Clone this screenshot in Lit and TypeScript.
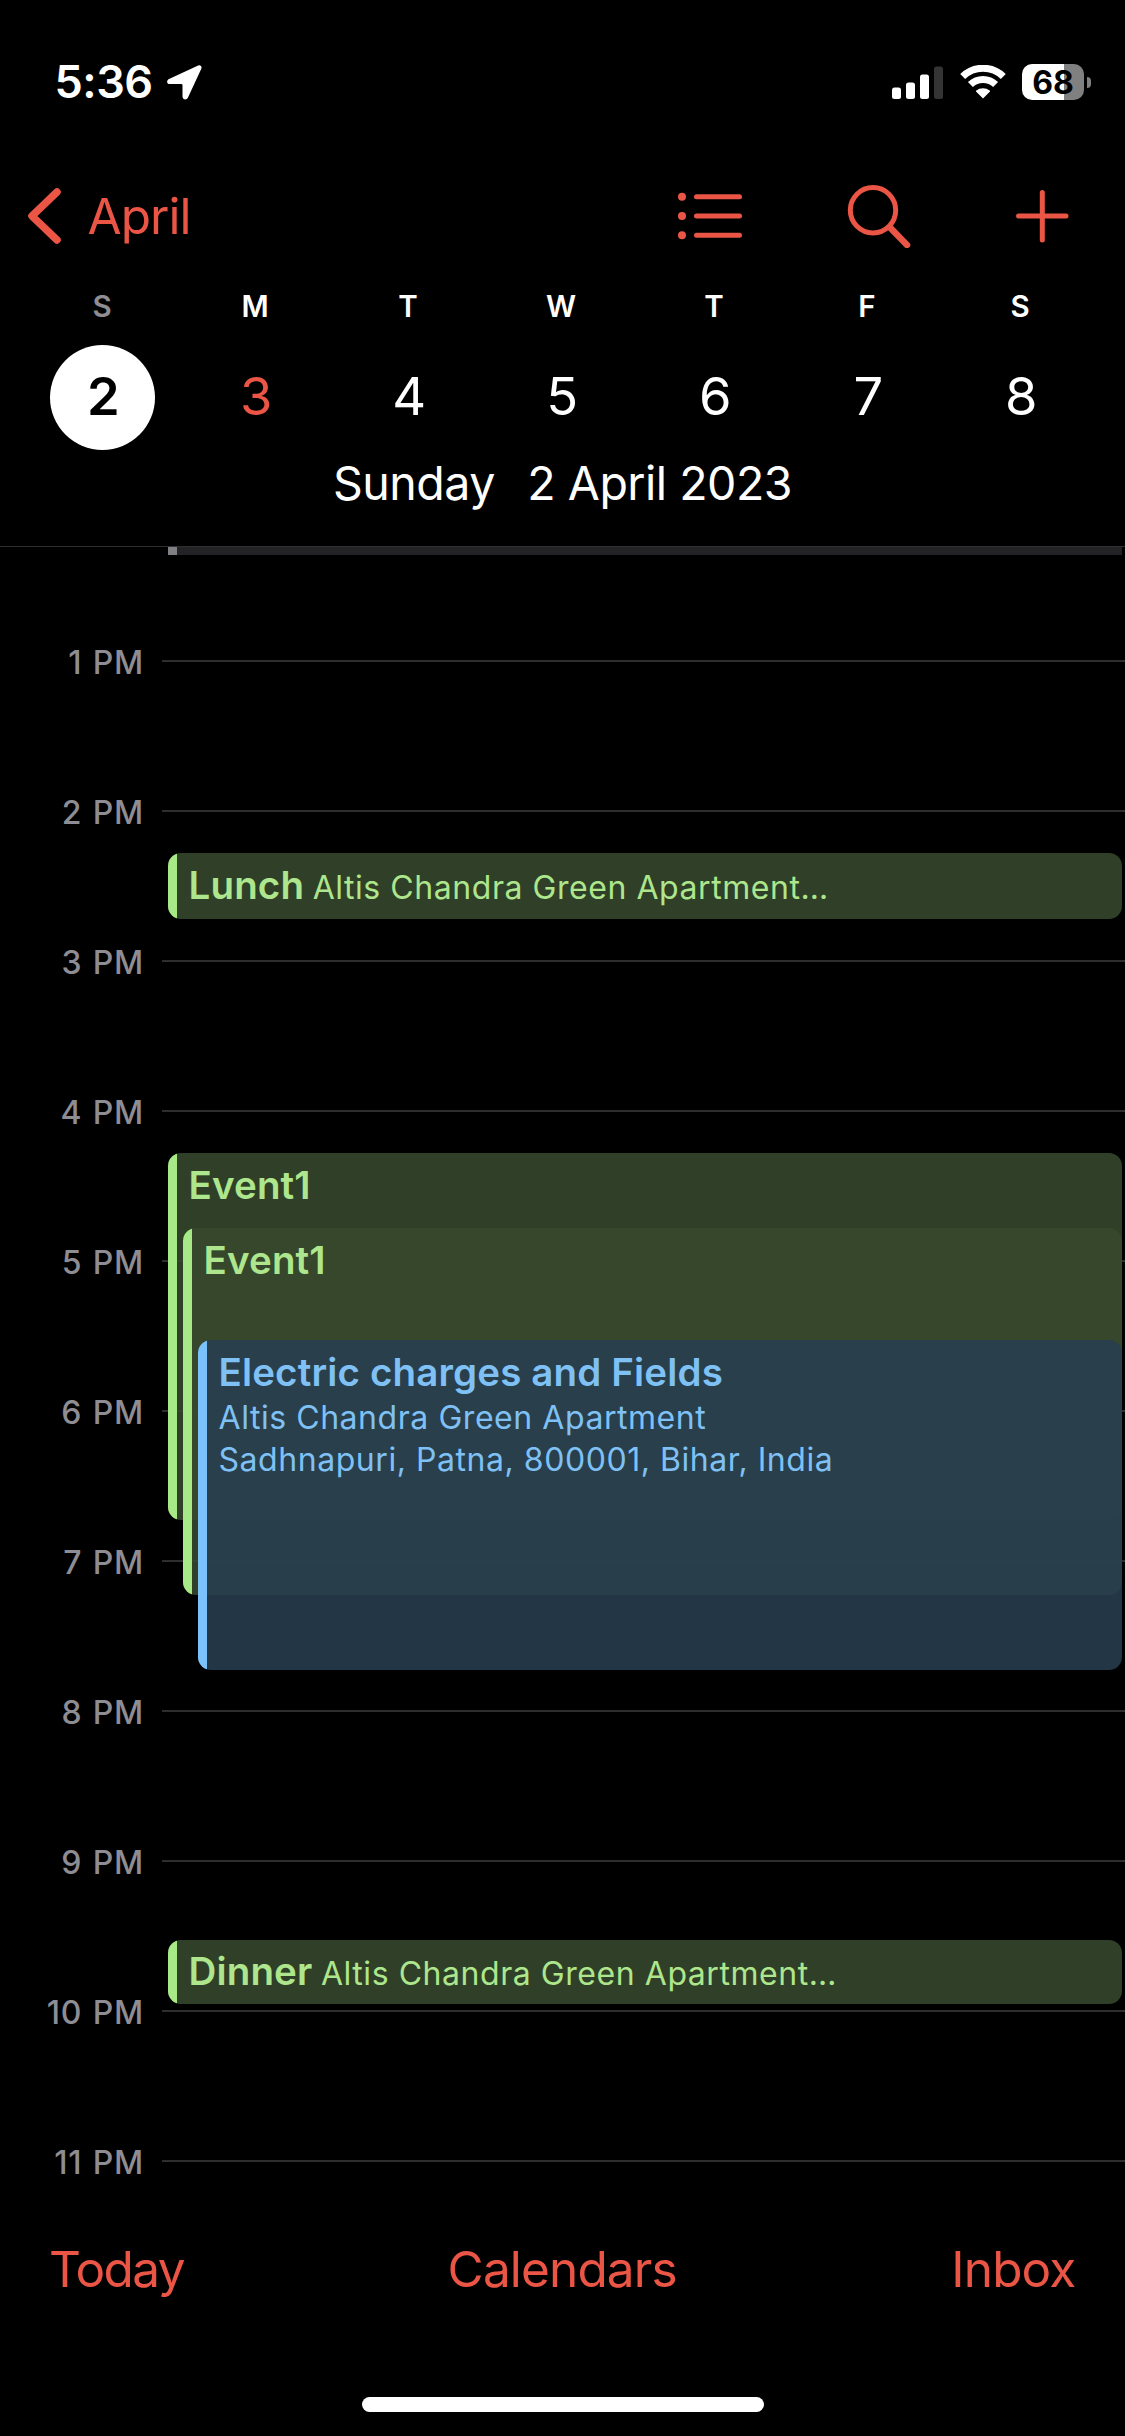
import { LitElement, html, css } from "lit";
import { customElement, property } from "lit/decorators.js";
import { classMap } from "lit/directives/class-map.js";
import { styleMap } from "lit/directives/style-map.js";

interface CalendarEvent {
  title: string;
  place?: string[];
  inline?: boolean;
  /** Minutes after noon. */
  start: number;
  end: number;
  depth: number;
  tone: "green" | "blue" | "grey";
}

const PX_PER_MINUTE = 2.5;
const NOON_OFFSET = -36;
const TOP_INSET = 4.5;
const BOTTOM_INSET = 3.5;

const EVENTS: CalendarEvent[] = [
  { title: "", start: 0, end: 19, depth: 0, tone: "grey" },
  { title: "Lunch", place: ["Altis Chandra Green Apartment…"], inline: true, start: 135, end: 164.6, depth: 0, tone: "green" },
  { title: "Event1", start: 255, end: 405, depth: 0, tone: "green" },
  { title: "Event1", start: 285, end: 435, depth: 1, tone: "green" },
  {
    title: "Electric charges and Fields",
    place: ["Altis Chandra Green Apartment", "Sadhnapuri, Patna, 800001, Bihar, India"],
    start: 330,
    end: 465,
    depth: 2,
    tone: "blue",
  },
  { title: "Dinner", place: ["Altis Chandra Green Apartment…"], inline: true, start: 570, end: 598.6, depth: 0, tone: "green" },
];

@customElement("status-bar")
class StatusBar extends LitElement {
  static styles = css`
    :host {
      display: flex;
      align-items: center;
      height: 98px;
      padding: 33px 34px 0 54.5px;
      color: #fff;
    }
    .time {
      font-size: 45px;
      font-weight: 600;
      letter-spacing: -0.5px;
      line-height: 50px;
    }
    .arrow {
      margin: 1px 0 0 14px;
    }
    .spacer {
      flex: 1;
    }
    .signal {
      margin-right: 17px;
    }
    .wifi {
      margin-right: 16px;
    }
    .battery {
      display: flex;
      align-items: center;
      gap: 3px;
    }
    .cell {
      width: 62px;
      height: 36px;
      border-radius: 10px;
      background: linear-gradient(90deg, #fff 68%, #808080 68%);
      color: #000;
      font-size: 32px;
      font-weight: 700;
      line-height: 37px;
      text-align: center;
    }
    .cap {
      width: 4px;
      height: 11px;
      border-radius: 0 6px 6px 0;
      background: #808080;
    }
    svg {
      display: block;
    }
  `;

  render() {
    return html`
      <span class="time">5:36</span>
      <svg class="arrow" width="35" height="35" viewBox="0 0 35 35" fill="#fff">
        <path d="M31.200.4 2 14C-.9 15.400-.3 19 2.800 19H14.200Q15.500 19 15.500 20.300V31.500C15.500 34.900 19.600 35.500 21 32.600L34.300 3.800C35.300 1.500 33.400-.6 31.200.4Z" />
      </svg>
      <span class="spacer"></span>
      <svg class="signal" width="51" height="33" viewBox="0 0 51 33" fill="#fff">
        <rect x="0" y="21.500" width="9" height="11.500" rx="2.500" />
        <rect x="14" y="16.500" width="9" height="16.500" rx="2.500" />
        <rect x="28" y="8.500" width="9" height="24.500" rx="2.500" />
        <rect x="42" y="0.500" width="9" height="32.500" rx="2.500" fill="#343434" />
      </svg>
      <svg class="wifi" width="46" height="34" viewBox="0 0 46 34">
        <g fill="none" stroke="#fff" stroke-width="7">
          <path d="M2.700 11.500A29 29 0 0 1 43.300 11.500" />
          <path d="M10.400 19.600A18 18 0 0 1 35.600 19.600" />
        </g>
        <path d="M23 33.500 16 26.600Q15.700 26 16.300 25.600A10.600 10.600 0 0 1 29.700 25.600Q30.300 26 30 26.600Z" fill="#fff" />
      </svg>
      <div class="battery">
        <div class="cell">68</div>
        <div class="cap"></div>
      </div>
    `;
  }
}

@customElement("nav-bar")
class NavBar extends LitElement {
  static styles = css`
    :host {
      display: flex;
      align-items: center;
      height: 130px;
      padding: 20px 56px 0 28px;
      color: #eb5545;
    }
    .back {
      display: flex;
      align-items: center;
      gap: 25.500px;
      font-size: 49.500px;
      line-height: 60px;
      letter-spacing: -0.950px;
    }
    .actions {
      display: flex;
      align-items: center;
      margin-left: auto;
    }
    .search {
      margin: 0 104.500px 0 103.500px;
    }
    svg {
      display: block;
      fill: none;
      stroke: currentColor;
      stroke-linecap: round;
      stroke-linejoin: round;
    }
    .dots {
      fill: currentColor;
      stroke: none;
    }
  `;

  render() {
    return html`
      <div class="back">
        <svg width="34" height="58" viewBox="0 0 34 58" stroke-width="7.500">
          <path d="M29 5 4 29 29 53" />
        </svg>
        <span>April</span>
      </div>
      <div class="actions">
        <svg width="65" height="48" viewBox="0 0 65 48" stroke-width="5">
          <g class="dots">
            <circle cx="4" cy="4.700" r="4" />
            <circle cx="4" cy="24" r="4" />
            <circle cx="4" cy="43.300" r="4" />
          </g>
          <path d="M18.500 4.700H61.500M18.500 24H61.500M18.500 43.300H61.500" />
        </svg>
        <svg class="search" width="64" height="64" viewBox="0 0 64 64" stroke-width="5">
          <circle cx="26" cy="26.300" r="22.700" />
          <path d="M43 43.500 60 61" stroke-width="6.500" />
        </svg>
        <svg width="54" height="54" viewBox="0 0 54 54" stroke-width="5">
          <path d="M3.500 27H51M27.300 3.500V51" />
        </svg>
      </div>
    `;
  }
}

@customElement("week-strip")
class WeekStrip extends LitElement {
  static styles = css`
    :host {
      display: block;
      color: #fff;
    }
    .week {
      display: grid;
      grid-template-columns: repeat(7, 153px);
      padding-left: 26px;
    }
    .day {
      display: flex;
      flex-direction: column;
      align-items: center;
    }
    .letter {
      height: 51px;
      padding-right: 1px;
      line-height: 51px;
      font-size: 29.500px;
      font-weight: 600;
    }
    .number {
      box-sizing: border-box;
      width: 105px;
      height: 105px;
      margin-top: 13px;
      padding-left: 1.500px;
      border-radius: 50%;
      text-align: center;
      line-height: 102px;
      font-size: 52.500px;
    }
    .weekend {
      color: #8d8d93;
    }
    .selected {
      background: #fff;
      color: #000;
      font-weight: 600;
    }
    .today {
      color: #eb5545;
    }
    .date {
      display: flex;
      justify-content: center;
      gap: 32.500px;
      height: 66px;
      line-height: 66px;
      padding-bottom: 30px;
      font-size: 46.500px;
      letter-spacing: -0.500px;
      border-bottom: 1px solid #303032;
    }
  `;

  render() {
    const days = ["S", "M", "T", "W", "T", "F", "S"];
    return html`
      <div class="week">
        ${days.map(
          (letter, i) => html`
            <div class="day">
              <span class=${classMap({ letter: true, weekend: i === 0 })}>${letter}</span>
              <span class=${classMap({ number: true, selected: i === 0, today: i === 1 })}>${i + 2}</span>
            </div>
          `,
        )}
      </div>
      <div class="date"><span>Sunday</span><span>2 April 2023</span></div>
    `;
  }
}

@customElement("day-event")
class DayEvent extends LitElement {
  @property({ attribute: false }) event!: CalendarEvent;

  static styles = css`
    :host {
      display: block;
    }
    .card {
      display: flex;
      height: 100%;
      border-radius: 13px;
      overflow: hidden;
    }
    .bar {
      flex: none;
      width: 9px;
    }
    .body {
      display: flex;
      flex-direction: column;
      padding: 9px 0 0 11.500px;
      white-space: nowrap;
    }
    .title {
      font-size: 38.500px;
      font-weight: 600;
      line-height: 46px;
      letter-spacing: 0.150px;
      margin-bottom: 2px;
    }
    .line {
      font-size: 32px;
      line-height: 42px;
      letter-spacing: 0.550px;
    }
    .body.row {
      flex-direction: row;
      align-items: baseline;
      align-self: center;
      gap: 8.500px;
      padding-top: 0;
    }
    .green {
      background: rgba(55, 72, 45, 0.87);
      color: #ade68c;
    }
    .green .bar {
      background: #a8e987;
    }
    .blue {
      background: rgba(39, 62, 80, 0.87);
      color: #7fc1f5;
    }
    .blue .bar {
      background: #7bc2fc;
    }
    .grey {
      background: #232325;
      border-radius: 0;
    }
    .grey .bar {
      background: #7f7f84;
    }
  `;

  render() {
    const { title, place = [], inline = false, tone } = this.event;
    return html`
      <div class="card ${tone}">
        <div class="bar"></div>
        <div class=${classMap({ body: true, row: inline })}>
          <span class="title">${title}</span>
          ${place.map((line) => html`<span class="line">${line}</span>`)}
        </div>
      </div>
    `;
  }
}

@customElement("day-timeline")
class DayTimeline extends LitElement {
  static styles = css`
    :host {
      display: block;
      position: relative;
      padding-top: 39px;
      overflow: hidden;
    }
    .hour {
      display: flex;
      align-items: center;
      height: 150px;
    }
    .label {
      width: 144px;
      padding-top: 3px;
      text-align: right;
      color: #8d8d93;
      font-size: 32px;
      font-weight: 500;
      font-kerning: none;
      line-height: 40px;
      letter-spacing: 0.800px;
      word-spacing: 1px;
    }
    .rule {
      flex: 1;
      height: 2px;
      margin-left: 18px;
      background: #2e2e30;
    }
    .event {
      position: absolute;
      right: 3px;
    }
  `;

  render() {
    const hours = Array.from({ length: 11 }, (_, i) => i + 1);
    return html`
      ${hours.map(
        (h) => html`
          <div class="hour">
            <span class="label">${h} PM</span>
            <span class="rule"></span>
          </div>
        `,
      )}
      ${EVENTS.map((event) => {
        const top = Math.floor(NOON_OFFSET + event.start * PX_PER_MINUTE + TOP_INSET);
        const bottom = Math.floor(NOON_OFFSET + event.end * PX_PER_MINUTE - BOTTOM_INSET);
        return html`
          <day-event
            class="event"
            .event=${event}
            style=${styleMap({
              top: `${top}px`,
              height: `${bottom - top}px`,
              left: `${168 + event.depth * 15}px`,
            })}
          ></day-event>
        `;
      })}
    `;
  }
}

@customElement("app-root")
class AppRoot extends LitElement {
  static styles = css`
    :host {
      display: flex;
      flex-direction: column;
      width: 1125px;
      height: 2436px;
      overflow: hidden;
      background: #000;
      font-family: Inter, "Liberation Sans", sans-serif;
    }
    .toolbar {
      display: grid;
      grid-template-columns: 1fr auto 1fr;
      padding: 0 49.500px 0 49px;
      color: #eb5545;
      font-size: 49.500px;
      line-height: 66px;
      letter-spacing: -0.850px;
    }
    .today {
      letter-spacing: -1.600px;
    }
    .inbox {
      text-align: right;
    }
    .home {
      width: 402px;
      height: 15px;
      margin: auto auto 24px;
      border-radius: 8px;
      background: #fff;
    }
  `;

  render() {
    return html`
      <status-bar></status-bar>
      <nav-bar></nav-bar>
      <week-strip></week-strip>
      <day-timeline></day-timeline>
      <div class="toolbar">
        <span class="today">Today</span>
        <span>Calendars</span>
        <span class="inbox">Inbox</span>
      </div>
      <div class="home"></div>
    `;
  }
}
